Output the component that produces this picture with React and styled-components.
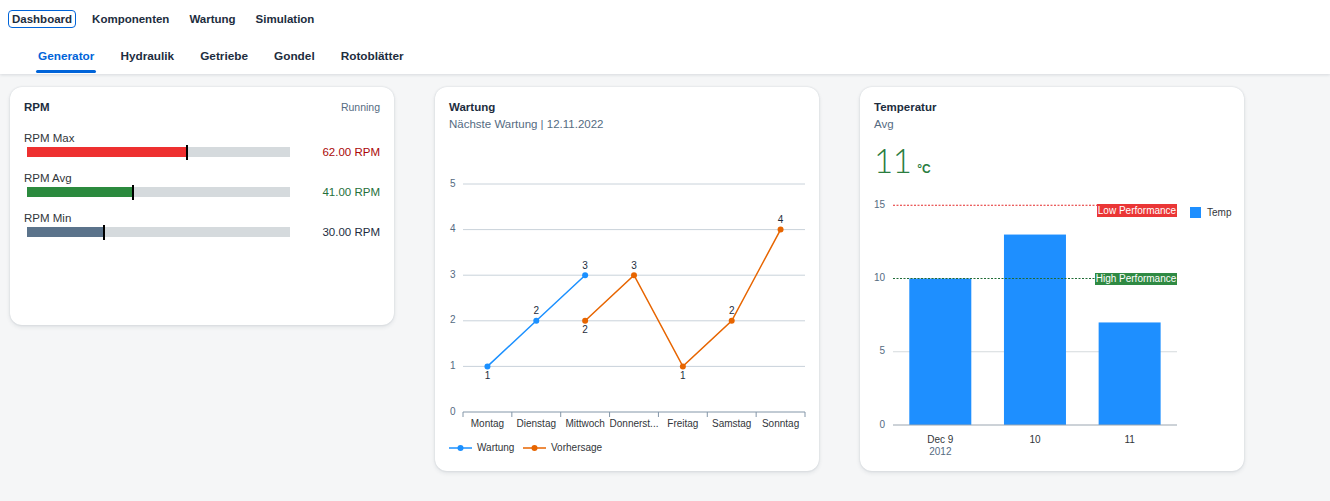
import styled, { createGlobalStyle } from "styled-components";

const GlobalStyle = createGlobalStyle`
  html, body {
    margin: 0;
    height: 100%;
  }
  body {
    font-family: "Liberation Sans", Arial, sans-serif;
    background: #f5f6f7;
    color: #1d2d3e;
  }
  #root {
    min-height: 100vh;
    display: flex;
    flex-direction: column;
  }
`;

const Header = styled.header`
  background: #fff;
  box-shadow: 0 1px 3px rgba(34, 53, 72, 0.14);
  position: relative;
  z-index: 1;
`;

const TopNav = styled.nav`
  display: flex;
  gap: 12px;
  height: 38px;
  box-sizing: border-box;
  padding: 10px 8px 0;
  align-items: flex-start;
`;

const NavItem = styled.span`
  font-size: 11.5px;
  font-weight: bold;
  line-height: 14px;
  padding: 1px 3px;
  border: 1.5px solid ${(p) => (p.$active ? "#0064d9" : "transparent")};
  border-radius: 4px;
  color: #1d2d3e;
`;

const TabBar = styled.div`
  display: flex;
  gap: 22px;
  height: 36px;
  padding-left: 36px;
`;

const Tab = styled.span`
  position: relative;
  display: flex;
  align-items: center;
  padding: 0 2px;
  font-size: 11.8px;
  font-weight: bold;
  color: ${(p) => (p.$active ? "#0064d9" : "#1d2d3e")};

  &::after {
    content: "";
    display: ${(p) => (p.$active ? "block" : "none")};
    position: absolute;
    left: 0;
    right: 0;
    bottom: 1px;
    height: 3px;
    border-radius: 2px;
    background: #0064d9;
  }
`;

const Content = styled.main`
  flex: 1;
  display: grid;
  grid-template-columns: repeat(3, 384px);
  column-gap: 41px;
  align-items: start;
  padding: 13px 10px;
`;

const Card = styled.section`
  height: ${(p) => p.$h}px;
  box-sizing: border-box;
  padding: 12px 14px 14px;
  background: #fff;
  border-radius: 12px;
  box-shadow: 0 0 2px rgba(34, 53, 72, 0.16), 0 2px 4px rgba(34, 53, 72, 0.1);
  display: flex;
  flex-direction: column;
`;

const CardHeader = styled.div`
  display: flex;
  justify-content: space-between;
  align-items: center;
`;

const Title = styled.div`
  font-size: 11.5px;
  font-weight: bold;
  line-height: 16px;
`;

const Status = styled.span`
  font-size: 10.5px;
  color: #556b82;
`;

const Subtitle = styled.div`
  font-size: 11.5px;
  line-height: 18px;
  color: #556b82;
`;

const GaugeList = styled.div`
  display: flex;
  flex-direction: column;
  gap: 12px;
  margin-top: 15px;
`;

const GaugeLabel = styled.div`
  font-size: 11.5px;
  line-height: 16px;
  color: #32363a;
`;

const GaugeLine = styled.div`
  display: flex;
  align-items: center;
  height: 12px;
`;

const Track = styled.div`
  width: 263px;
  height: 10px;
  margin-left: 3px;
  background: #d5dadd;
  display: flex;
`;

const Fill = styled.div`
  position: relative;
  height: 100%;
  background: ${(p) => p.$color};

  &::after {
    content: "";
    position: absolute;
    right: -1px;
    top: -2px;
    bottom: -3px;
    width: 2px;
    background: #000;
  }
`;

const GaugeValue = styled.span`
  flex: 1;
  text-align: right;
  font-size: 11.5px;
  color: ${(p) => p.$color};
`;

const Kpi = styled.div`
  display: flex;
  align-items: baseline;
  gap: 6px;
  height: 36px;
  margin-top: 9px;
  color: #2b7d3f;
`;

const KpiNumber = styled.span`
  font-family: Lato, "Liberation Sans", sans-serif;
  font-weight: 300;
  font-size: 33px;
  line-height: 36px;
  letter-spacing: -0.5px;
`;

const KpiUnit = styled.span`
  font-size: 12px;
  font-weight: bold;
`;

const Chart = styled.svg`
  display: block;
  overflow: visible;
  margin-top: ${(p) => p.$mt}px;
  font-family: "Liberation Sans", Arial, sans-serif;
`;

const gauges = [
  { label: "RPM Max", value: 62, color: "#ee3030", text: "#aa0808" },
  { label: "RPM Avg", value: 41, color: "#2b8a3e", text: "#256f3a" },
  { label: "RPM Min", value: 30, color: "#5b738b", text: "#1d2d3e" },
];

const days = ["Montag", "Dienstag", "Mittwoch", "Donnerst...", "Freitag", "Samstag", "Sonntag"];
const wartung = [
  { i: 0, v: 1, pos: "below" },
  { i: 1, v: 2, pos: "above" },
  { i: 2, v: 3, pos: "above" },
];
const vorhersage = [
  { i: 2, v: 2, pos: "below" },
  { i: 3, v: 3, pos: "above" },
  { i: 4, v: 1, pos: "below" },
  { i: 5, v: 2, pos: "above" },
  { i: 6, v: 4, pos: "above" },
];

const step = (356 - 14) / 7;
const cx = (i) => 14 + (i + 0.5) * step;
const ly = (v) => 277 - v * 45.6;

function Series({ points, color }) {
  const d = points.map((p, k) => `${k ? "L" : "M"}${cx(p.i)} ${ly(p.v)}`).join(" ");
  return (
    <g>
      <path d={d} fill="none" stroke={color} strokeWidth="1.5" />
      {points.map((p) => (
        <g key={p.i}>
          <circle cx={cx(p.i)} cy={ly(p.v)} r="3" fill={color} />
          <text
            x={cx(p.i)}
            y={ly(p.v) + (p.pos === "above" ? -9 : 10)}
            fontSize="10"
            fill="#1d2d3e"
            textAnchor="middle"
            dominantBaseline="middle"
          >
            {p.v}
          </text>
        </g>
      ))}
    </g>
  );
}

function LineChart() {
  return (
    <Chart width="356" height="320" $mt={2}>
      {[1, 2, 3, 4, 5].map((v) => (
        <line key={v} x1="14" x2="356" y1={ly(v)} y2={ly(v)} stroke="#c9d2da" strokeWidth="1" />
      ))}
      {[0, 1, 2, 3, 4, 5].map((v) => (
        <text key={v} x="1" y={ly(v)} fontSize="10" fill="#556b82" dominantBaseline="middle">
          {v}
        </text>
      ))}
      <line x1="14" x2="356" y1={ly(0)} y2={ly(0)} stroke="#8396a8" />
      {Array.from({ length: 8 }).map((_, i) => (
        <line key={i} x1={14 + i * step} x2={14 + i * step} y1={ly(0)} y2={ly(0) + 5} stroke="#8396a8" />
      ))}
      {days.map((d, i) => (
        <text key={d} x={cx(i)} y="289" fontSize="10" fill="#32363a" textAnchor="middle" dominantBaseline="middle">
          {d}
        </text>
      ))}
      <Series points={wartung} color="#1b90ff" />
      <Series points={vorhersage} color="#e76500" />
      <g fontSize="10" fill="#32363a" dominantBaseline="middle">
        <line x1="0" x2="23" y1="313" y2="313" stroke="#1b90ff" strokeWidth="1.5" />
        <circle cx="11.5" cy="313" r="3" fill="#1b90ff" />
        <text x="28" y="313">Wartung</text>
        <line x1="74" x2="97" y1="313" y2="313" stroke="#e76500" strokeWidth="1.5" />
        <circle cx="85.5" cy="313" r="3" fill="#e76500" />
        <text x="102" y="313">Vorhersage</text>
      </g>
    </Chart>
  );
}

const temps = [
  { v: 10, label: "Dec 9", sub: "2012" },
  { v: 13, label: "10" },
  { v: 7, label: "11" },
];
const by = (v) => 240 - v * 14.65;
const bandW = (303 - 19) / 3;

function BarChart() {
  return (
    <Chart width="356" height="272" $mt={7}>
      <line x1="19" x2="303" y1={by(5)} y2={by(5)} stroke="#d5dadd" />
      {[0, 5, 10, 15].map((v) => (
        <text key={v} x="11" y={by(v)} fontSize="10" fill="#556b82" textAnchor="end" dominantBaseline="middle">
          {v}
        </text>
      ))}
      {temps.map((t, i) => (
        <g key={t.label}>
          <rect x={19 + i * bandW + 16.3} y={by(t.v)} width="62" height={by(0) - by(t.v)} fill="#1e8fff" />
          <text x={19 + (i + 0.5) * bandW} y="255" fontSize="10" fill="#32363a" textAnchor="middle" dominantBaseline="middle">
            {t.label}
          </text>
          {t.sub && (
            <text x={19 + (i + 0.5) * bandW} y="267" fontSize="10" fill="#556b82" textAnchor="middle" dominantBaseline="middle">
              {t.sub}
            </text>
          )}
        </g>
      ))}
      <line x1="19" x2="303" y1={by(0)} y2={by(0)} stroke="#9aa5b0" />
      <line x1="19" x2="223" y1={by(15)} y2={by(15)} stroke="#e32b2b" strokeDasharray="2 1.5" />
      <rect x="223" y="19" width="80" height="13" fill="#ea3636" />
      <text x="263" y="26" fontSize="10" fill="#fff" textAnchor="middle" dominantBaseline="middle">
        Low Performance
      </text>
      <line x1="19" x2="221" y1={by(10)} y2={by(10)} stroke="#1f6b35" strokeDasharray="2 1.5" />
      <rect x="221" y="88" width="82" height="12" fill="#2f8a43" />
      <text x="262" y="94.5" fontSize="10" fill="#fff" textAnchor="middle" dominantBaseline="middle">
        High Performance
      </text>
      <rect x="316" y="22" width="11" height="11" fill="#1e8fff" />
      <text x="333" y="28" fontSize="10" fill="#32363a" dominantBaseline="middle">
        Temp
      </text>
    </Chart>
  );
}

function App() {
  return (
    <>
      <GlobalStyle />
      <Header>
        <TopNav>
          <NavItem $active>Dashboard</NavItem>
          <NavItem>Komponenten</NavItem>
          <NavItem>Wartung</NavItem>
          <NavItem>Simulation</NavItem>
        </TopNav>
        <TabBar>
          <Tab $active>Generator</Tab>
          <Tab>Hydraulik</Tab>
          <Tab>Getriebe</Tab>
          <Tab>Gondel</Tab>
          <Tab>Rotoblätter</Tab>
        </TabBar>
      </Header>
      <Content>
        <Card $h={238}>
          <CardHeader>
            <Title>RPM</Title>
            <Status>Running</Status>
          </CardHeader>
          <GaugeList>
            {gauges.map((g) => (
              <div key={g.label}>
                <GaugeLabel>{g.label}</GaugeLabel>
                <GaugeLine>
                  <Track>
                    <Fill $color={g.color} style={{ width: `${(g.value / 102) * 100}%` }} />
                  </Track>
                  <GaugeValue $color={g.text}>{g.value.toFixed(2)} RPM</GaugeValue>
                </GaugeLine>
              </div>
            ))}
          </GaugeList>
        </Card>
        <Card $h={384}>
          <Title>Wartung</Title>
          <Subtitle>Nächste Wartung | 12.11.2022</Subtitle>
          <LineChart />
        </Card>
        <Card $h={384}>
          <Title>Temperatur</Title>
          <Subtitle>Avg</Subtitle>
          <Kpi>
            <KpiNumber>11</KpiNumber>
            <KpiUnit>°C</KpiUnit>
          </Kpi>
          <BarChart />
        </Card>
      </Content>
    </>
  );
}

export default App;
